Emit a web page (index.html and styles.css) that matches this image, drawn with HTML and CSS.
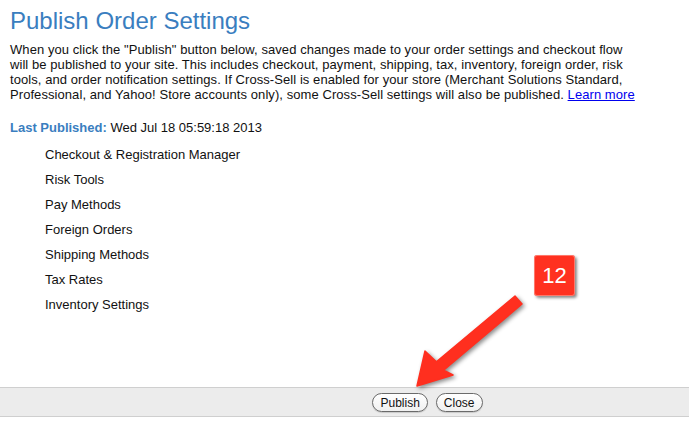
FILE: index.html
```html
<!DOCTYPE html>
<html lang="en">
<head>
    <meta charset="UTF-8">
    <meta name="viewport" content="width=device-width, initial-scale=1.0">
    <title>Publish Order Settings</title>
    <link rel="stylesheet" href="styles.css">
</head>
<body>
<div class="content">
    <h1>Publish Order Settings</h1>
    <p class="intro">When you click the "Publish" button below, saved changes made to your order settings and checkout flow will be published to your site. This includes checkout, payment, shipping, tax, inventory, foreign order, risk tools, and order notification settings. If Cross-Sell is enabled for your store (Merchant Solutions Standard, Professional, and Yahoo! Store accounts only), some Cross-Sell settings will also be published. <a href="#">Learn more</a></p>

    <p class="last-published"><span class="label">Last Published:</span> Wed Jul 18 05:59:18 2013</p>

    <ul class="sections">
        <li>Checkout &amp; Registration Manager</li>
        <li>Risk Tools</li>
        <li>Pay Methods</li>
        <li>Foreign Orders</li>
        <li>Shipping Methods</li>
        <li>Tax Rates</li>
        <li>Inventory Settings</li>
    </ul>
</div>

<div class="footer">
    <button type="button">Publish</button>
    <button type="button">Close</button>
</div>

<!-- annotation -->
<div class="badge">12</div>
<svg class="arrow" width="689" height="432" viewBox="0 0 689 432">
    <polygon points="515,296 436.4,361.8 425,351 417,386 453,375 443.6,370.2 522,304" fill="#ff2f1f" stroke="#ff2f1f" stroke-width="1.5" stroke-linejoin="round"/>
</svg>
</body>
</html>
```

FILE: styles.css
```css
body {
    margin: 0;
    font-family: "Liberation Sans", Arial, sans-serif;
    font-size: 13px;
    color: #111;
    background: #fff;
    position: relative;
    width: 689px;
    height: 432px;
    overflow: hidden;
}
.content {
    height: 387px;
    padding: 7px 10px 0 10px;
    box-sizing: border-box;
}
h1 {
    margin: 0 0 7px 0;
    font-size: 24px;
    line-height: 28px;
    font-weight: normal;
    color: #3a7ebf;
}
.intro {
    margin: 0;
    width: 628px;
    line-height: 15px;
    letter-spacing: 0.07px;
}
.intro a {
    color: #0000ee;
}
.last-published {
    margin: 18px 0 7px 0;
    line-height: 15px;
}
.label {
    font-weight: bold;
    color: #3a7ebf;
}
.sections {
    list-style: none;
    margin: 0;
    padding: 0 0 0 35px;
}
.sections li {
    line-height: 25px;
}
.footer {
    display: flex;
    justify-content: center;
    gap: 8px;
    height: 30px;
    padding: 5px 0 0 166px;
    box-sizing: border-box;
    background: #ececec;
    border-top: 1px solid #cfcfcf;
    border-bottom: 1px solid #cfcfcf;
}
.footer button {
    height: 19px;
    padding: 0 7px;
    font-family: "Liberation Sans", Arial, sans-serif;
    font-size: 12px;
    color: #111;
    background: linear-gradient(#ffffff, #f0f0f0);
    border: 1px solid #6a6a6a;
    border-radius: 10px;
    box-shadow: 0 1px 1px rgba(0, 0, 0, 0.15);
}
.badge {
    position: absolute;
    left: 534px;
    top: 255px;
    width: 41px;
    height: 41px;
    border-radius: 3px;
    background: #ff3120;
    color: #fff;
    font-size: 22px;
    line-height: 41px;
    text-align: center;
    box-shadow: 2px 2px 3px rgba(0, 0, 0, 0.45), inset 0 0 0 1px rgba(255, 190, 180, 0.5);
}
.arrow {
    position: absolute;
    left: 0;
    top: 0;
    pointer-events: none;
    filter: drop-shadow(2px 2px 2px rgba(0, 0, 0, 0.45));
}
```
